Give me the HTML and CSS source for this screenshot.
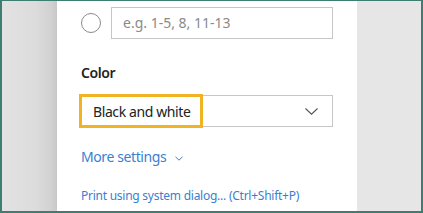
FILE: index.html
```html
<!DOCTYPE html>
<html lang="en">
<head>
<meta charset="UTF-8">
<title>Print</title>
<link rel="stylesheet" href="styles.css">
</head>
<body>
<div class="frame">
	<div class="side-left"></div>
	<div class="panel">
		<div class="pages-row">
			<span class="radio"></span>
			<div class="pages-input">e.g. 1-5, 8, 11-13</div>
		</div>
		<div class="label">Color</div>
		<div class="select">
			<span class="select-text">Black and white</span>
			<svg class="chevron" width="13" height="7" viewBox="0 0 13 7"><path d="M0.5 0.5 L6.5 6.2 L12.5 0.5" fill="none" stroke="#555" stroke-width="1.1"/></svg>
			<span class="highlight"></span>
		</div>
		<div class="more">More settings<svg class="more-chevron" width="8" height="5" viewBox="0 0 8 5"><path d="M0.5 0.8 L4 4.2 L7.5 0.8" fill="none" stroke="#3a7fcf" stroke-width="1"/></svg>
		</div>
		<div class="system">Print using system dialog... (Ctrl+Shift+P)</div>
	</div>
	<div class="side-right"></div>
</div>
</body>
</html>
```
FILE: styles.css
```css
body {
	margin: 0;
	font-family: "Noto Sans", "Open Sans", sans-serif;
}

.frame {
	width: 423px;
	height: 213px;
	box-sizing: border-box;
	border: 2px solid #3e7e72;
	border-top-width: 1px;
	display: flex;
	overflow: hidden;
}

.side-left {
	width: 55px;
	background: linear-gradient(to right, #e2e2e2 0, #dcdcdc 60%, #d2d2d2 88%, #c8c8c8 100%);
}

.panel {
	width: 300px;
	background: #fff;
	padding: 6px 24px 0 24px;
	box-sizing: border-box;
}

.side-right {
	flex: 1;
	background: #e6e6e6;
}

.pages-row {
	display: flex;
	align-items: center;
	gap: 10px;
}

.radio {
	width: 20px;
	height: 20px;
	box-sizing: border-box;
	border: 1px solid #8a8a8a;
	border-radius: 50%;
}

.pages-input {
	width: 222px;
	height: 32px;
	box-sizing: border-box;
	border: 1px solid #c6c6c6;
	padding-left: 11px;
	font-size: 14px;
	line-height: 30px;
	color: #8a8a8a;
}

.label {
	margin-top: 24px;
	font-size: 14px;
	letter-spacing: -0.4px;
	line-height: 20px;
	font-weight: 600;
	color: #222;
}

.select {
	position: relative;
	margin-top: 12px;
	height: 32px;
	box-sizing: border-box;
	border: 1px solid #c6c6c6;
	display: flex;
	align-items: center;
	justify-content: space-between;
	padding: 0 14px 0 11px;
	font-size: 14px;
	letter-spacing: -0.4px;
	color: #222;
}

.highlight {
	position: absolute;
	left: -3px;
	top: -2px;
	width: 118px;
	height: 28px;
	border: 3px solid #f0b323;
}

.more {
	margin-top: 20px;
	font-size: 14px;
	letter-spacing: -0.4px;
	line-height: 20px;
	color: #3a7fcf;
}

.more-chevron {
	margin-left: 9px;
	vertical-align: middle;
}

.system {
	margin-top: 20px;
	font-size: 12px;
	letter-spacing: -0.25px;
	line-height: 18px;
	color: #3a7fcf;
}
```
